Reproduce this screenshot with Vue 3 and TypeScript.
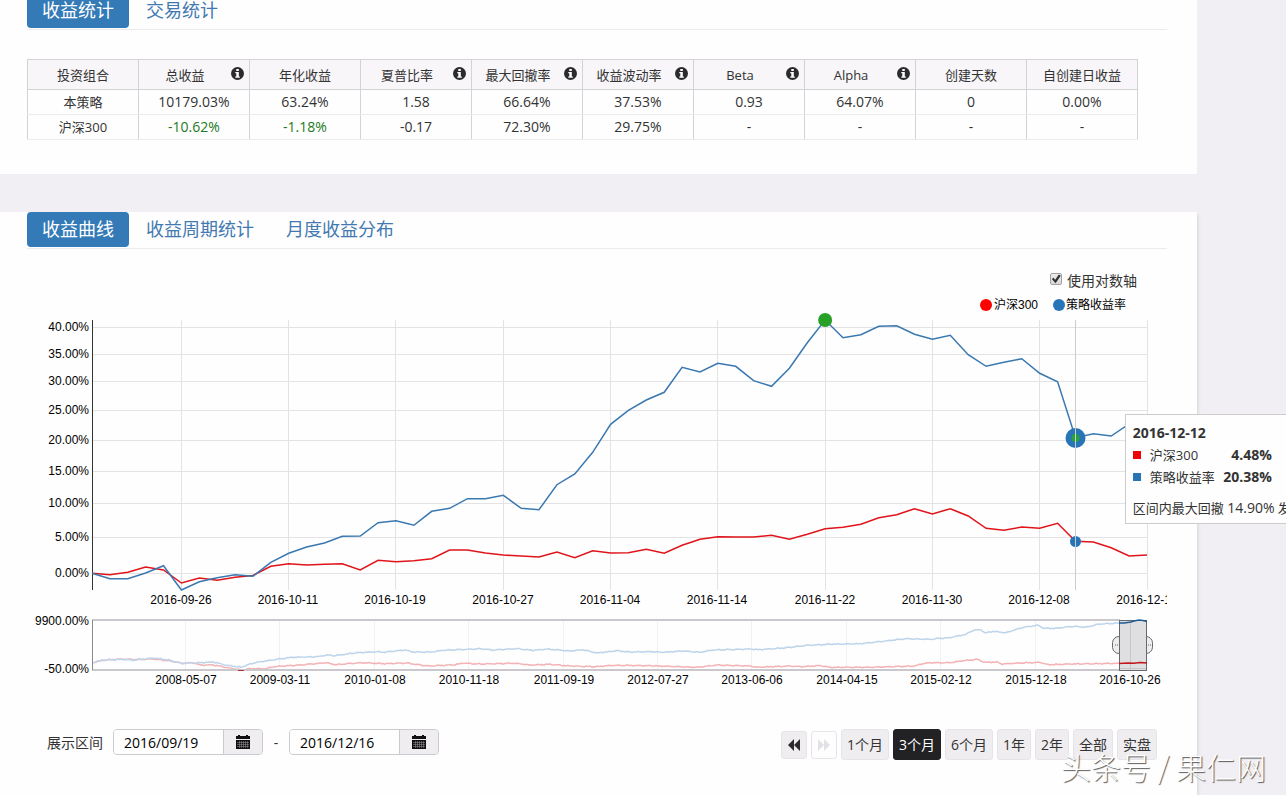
<script setup lang="ts">
import { ref } from 'vue'

interface Point { x: number; y: number }
interface Column { title: string; info: boolean }

const columns: Column[] = [
  { title: '投资组合', info: false },
  { title: '总收益', info: true },
  { title: '年化收益', info: false },
  { title: '夏普比率', info: true },
  { title: '最大回撤率', info: true },
  { title: '收益波动率', info: true },
  { title: 'Beta', info: true },
  { title: 'Alpha', info: true },
  { title: '创建天数', info: false },
  { title: '自创建日收益', info: false },
]

const rows: { name: string; cells: string[] }[] = [
  { name: '本策略', cells: ['10179.03%', '63.24%', '1.58', '66.64%', '37.53%', '0.93', '64.07%', '0', '0.00%'] },
  { name: '沪深300', cells: ['-10.62%', '-1.18%', '-0.17', '72.30%', '29.75%', '-', '-', '-', '-'] },
]

const isLoss = (value: string): boolean => value.startsWith('-') && value.endsWith('%')

const plotWidth = 1055
const step = plotWidth / 59

const indexLine = [
  253.3, 254.7, 252.3, 247, 250, 263, 258, 260.3, 257.3, 255.5, 246.3, 243.7, 245, 244.3, 243.7,
  250, 240.3, 241.7, 240.7, 238.7, 230, 230, 233, 235, 236, 237, 232, 237.7, 230.7, 233,
  232.7, 229.3, 233.3, 225.3, 219.3, 216.7, 217, 217, 215.3, 219.3, 214.3, 208.7, 207.3, 204.3, 197.7,
  194.7, 188.7, 194, 188.7, 196, 208.3, 210.3, 207, 208.3, 203.3, 221.3, 222, 227.7, 236, 235,
]
const strategyLine = [
  253.3, 258.7, 258.7, 253, 245.7, 270, 261.7, 257.7, 254.7, 256.3, 242.3, 233.3, 227, 223, 216.3,
  216, 202.7, 200.7, 205.3, 191.3, 188.3, 178.7, 178.7, 175.3, 188.3, 189.7, 164.7, 154, 132.3, 104.3,
  90.3, 80, 72.3, 47.3, 52, 43.3, 46.3, 60.7, 66.3, 48.3, 22.7, 0, 17.7, 14.7, 6.3,
  5.7, 14.3, 19.3, 15.3, 34.7, 46.3, 42.3, 38.7, 53.3, 61.7, 117.7, 113.7, 116, 104, 100,
]

const toPoints = (ys: number[]): string =>
  ys.map((y, i) => `${(i * step).toFixed(1)},${y}`).join(' ')

const yTicks: [string, number][] = [
  ['40.00%', 7], ['35.00%', 34], ['30.00%', 61], ['25.00%', 90], ['20.00%', 120],
  ['15.00%', 151], ['10.00%', 183], ['5.00%', 217], ['0.00%', 253],
]

const xTicks: string[] = [
  '2016-09-26', '2016-10-11', '2016-10-19', '2016-10-27', '2016-11-04',
  '2016-11-14', '2016-11-22', '2016-11-30', '2016-12-08', '2016-12-16',
]
const tickX = (i: number): number => Math.floor((5 + i * 6) * step)

const overviewTicks: string[] = [
  '2008-05-07', '2009-03-11', '2010-01-08', '2010-11-18', '2011-09-19', '2012-07-27',
  '2013-06-06', '2014-04-15', '2015-02-12', '2015-12-18', '2016-10-26',
]
const overviewX = (i: number): number => Math.round(94 + i * 94.4)

const pairs = (list: number[]): Point[] => {
  const out: Point[] = []
  for (let i = 0; i < list.length; i += 2) out.push({ x: list[i], y: list[i + 1] })
  return out
}

const strategyOverview = pairs([
  0, 42.7, 11, 40, 31, 39.3, 41, 40.3, 61, 38, 75, 39.7, 90, 43.3, 108, 42.7, 121, 42, 135, 45.3,
  149, 47.3, 156, 44.7, 163, 42.7, 185, 39.3, 200, 37.3, 225, 36.7, 235, 35, 242, 35.7, 265, 32.7,
  285, 31.7, 291, 32.3, 313, 30, 321, 32, 338, 32, 351, 30.3, 388, 28.7, 401, 30, 425, 28.7, 441, 30.3,
  455, 29, 478, 31, 491, 29.7, 505, 33, 525, 30.7, 538, 32, 561, 31.7, 571, 32.3, 591, 31, 608, 32.3,
  621, 30, 658, 29, 666, 29.7, 695, 27.7, 715, 25.3, 738, 24.3, 768, 23.7, 787, 21.7, 814, 18.7,
  837, 19.3, 857, 17.7, 874, 14.3, 881, 10.3, 889, 9.7, 893, 13, 901, 11.3, 914, 12.7, 931, 7.3,
  946, 5.3, 952, 8.3, 964, 8.3, 981, 6.3, 994, 7.3, 1007, 4, 1027, 3,
])
const indexOverview = pairs([
  0, 42.7, 11, 40.3, 31, 39, 41, 39.5, 61, 39, 75, 40.5, 90, 43.3, 101, 42.7, 108, 45, 121, 45,
  135, 47.5, 149, 50, 160, 48.5, 173, 48.7, 183, 46.5, 208, 45, 234, 42.7, 243, 44.7, 258, 43.5,
  271, 42.7, 293, 43.7, 315, 43, 328, 45, 338, 46, 363, 44.7, 371, 43, 385, 44, 423, 43.3, 438, 45,
  458, 44.3, 478, 46, 503, 46.7, 521, 45.3, 558, 45.7, 605, 47.3, 625, 45, 658, 46, 665, 47.3,
  698, 46, 708, 46.7, 728, 45.7, 738, 47.3, 778, 47.3, 788, 47, 823, 46, 830, 43.7, 840, 42.7,
  858, 42.7, 871, 40.7, 885, 39.3, 893, 42.3, 905, 42, 910, 44, 928, 43, 948, 42.3, 956, 44.7,
  978, 44, 1027, 43.3,
])

// Fills the gaps between anchors with small daily swings.
const dailyPath = (anchors: Point[]): string => {
  const out: string[] = []
  for (let i = 0; i < anchors.length - 1; i++) {
    const a = anchors[i]
    const b = anchors[i + 1]
    for (let x = a.x; x < b.x; x += 2) {
      const t = (x - a.x) / (b.x - a.x)
      const swing = Math.sin(x * 1.7) * 0.3 + Math.sin(x * 0.63) * 0.3
      out.push(`${x},${(a.y + (b.y - a.y) * t + swing).toFixed(1)}`)
    }
  }
  const last = anchors[anchors.length - 1]
  out.push(`${last.x},${last.y}`)
  return out.join(' ')
}

const cursorX = Math.floor(55 * step) + 0.5
const logAxis = ref(true)
const startDate = ref('2016/09/19')
const endDate = ref('2016/12/16')
const ranges: string[] = ['1个月', '3个月', '6个月', '1年', '2年', '全部', '实盘']
const activeRange = ref('3个月')
</script>

<template>
  <div class="page">
    <section class="panel summary">
      <nav class="tabs">
        <a class="tab active" href="#stats">收益统计</a>
        <a class="tab" href="#trades">交易统计</a>
      </nav>
      <table class="stats">
        <thead>
          <tr>
            <th v-for="col in columns" :key="col.title" scope="col">
              <div class="head">
                <span class="head-text">{{ col.title }}</span>
                <svg v-if="col.info" class="info" viewBox="0 0 13 13" aria-hidden="true">
                  <circle cx="6.5" cy="6.5" r="6.5" fill="#2b2b2e" />
                  <path d="M5.3 2h2.5v2H5.3zM4.3 5h3.5v4.4h1v1.3H4.3V9.4h1V6.3h-1z" fill="#fff" />
                </svg>
              </div>
            </th>
          </tr>
        </thead>
        <tbody>
          <tr v-for="row in rows" :key="row.name">
            <td class="name">{{ row.name }}</td>
            <td v-for="(cell, i) in row.cells" :key="i" :class="{ loss: isLoss(cell) }">{{ cell }}</td>
          </tr>
        </tbody>
      </table>
    </section>

    <section class="panel curve">
      <nav class="tabs">
        <a class="tab active" href="#curve">收益曲线</a>
        <a class="tab" href="#period">收益周期统计</a>
        <a class="tab" href="#monthly">月度收益分布</a>
      </nav>

      <div class="options">
        <input id="log-axis" v-model="logAxis" class="check" type="checkbox" />
        <label for="log-axis">使用对数轴</label>
      </div>

      <div class="chart">
        <svg class="plot" viewBox="0 0 1140 400">
          <g class="legend">
            <circle cx="959" cy="13" r="6" fill="#f00" />
            <text x="967" y="17">沪深300</text>
            <circle cx="1032" cy="13" r="6" fill="#2775b6" />
            <text x="1039" y="17">策略收益率</text>
          </g>

          <g transform="translate(65 28)">
            <g class="grid">
              <line v-for="[label, y] in yTicks" :key="label" x1="0" :x2="plotWidth" :y1="y + 0.5" :y2="y + 0.5" />
              <line v-for="(label, i) in xTicks" :key="label" :x1="tickX(i) + 0.5" :x2="tickX(i) + 0.5" y1="0" y2="270" />
            </g>
            <text v-for="[label, y] in yTicks" :key="label" class="y-label" x="-3" :y="y + 4">{{ label }}</text>
            <text v-for="(label, i) in xTicks" :key="label" class="x-label" :x="tickX(i)" y="284">{{ label }}</text>
            <line class="axis" x1="0.5" x2="0.5" y1="0" y2="270" />
            <polyline class="line index" :points="toPoints(indexLine)" />
            <polyline class="line strategy" :points="toPoints(strategyLine)" />
            <circle :cx="41 * step" cy="0" r="7" fill="#27a127" />
            <circle :cx="cursorX" cy="118" r="10" fill="#2775b6" />
            <circle :cx="cursorX" cy="118" r="4" fill="#27a13c" />
            <circle :cx="cursorX" cy="221.5" r="5.5" fill="#2775b6" />
            <line class="cursor" :x1="cursorX" :x2="cursorX" y1="0" y2="270" />
          </g>

          <g transform="translate(65 328)">
            <line v-for="(label, i) in overviewTicks" :key="label" class="faint" :x1="overviewX(i) - 0.5" :x2="overviewX(i) - 0.5" y1="0" y2="50" />
            <text v-for="(label, i) in overviewTicks" :key="label" class="x-label" :x="overviewX(i)" y="64">{{ label }}</text>
            <text class="y-label" x="-3" y="5">9900.00%</text>
            <text class="y-label" x="-3" y="53">-50.00%</text>
            <polyline class="thin" stroke="#f3b3b6" :points="dailyPath(indexOverview)" />
            <polyline class="thin" stroke="#bdd4ea" :points="dailyPath(strategyOverview)" />
            <path d="M0 0H1028M0 50H1028" stroke="#cac8cc" stroke-width="2" />
            <path d="M146 50.5h6" stroke="#b03038" />
            <path d="M0.5 0V50" stroke="#8c8a8e" />
            <rect x="1027.5" y="0.5" width="27" height="50" fill="#dfdee0" stroke="#6a686c" />
            <path d="M1038.5 1V50M1028 48.5H1054" stroke="#c6c5c8" />
            <polyline class="thin" stroke="#1d5c92" points="1027,3 1032,3 1039,2 1042,1 1047,0 1051,0.5 1055,1.5" />
            <polyline class="thin" stroke="#c4171d" points="1027,43.5 1036,43 1042,43.3 1048,42.5 1055,43" />
            <path class="handle" d="M1027.5 16.5a6.5 6.5 0 0 0 -7 6v5a6.5 6.5 0 0 0 7 6z" />
            <path class="handle" d="M1054.5 16.5a6.5 6.5 0 0 1 6 6v5a6.5 6.5 0 0 1 -6 6z" />
            <path d="M1023.5 24v2M1025.5 24v2M1056.5 24v2M1058.5 24v2" stroke="#aaa" />
          </g>
        </svg>

        <div class="tooltip">
          <strong class="tip-date">2016-12-12</strong>
          <div class="tip-row"><i class="swatch red"></i><span class="tip-name">沪深300</span><b>4.48%</b></div>
          <div class="tip-row"><i class="swatch blue"></i><span class="tip-name">策略收益率</span><b>20.38%</b></div>
          <p class="tip-note">区间内最大回撤 <span class="tip-number">14.90%</span> 发生</p>
        </div>
      </div>

      <div class="controls">
        <div class="dates">
          <label class="date-label" for="start-date">展示区间</label>
          <div class="date-field">
            <input id="start-date" v-model="startDate" type="text" />
            <button type="button" aria-label="选择开始日期">
              <svg class="calendar" viewBox="0 0 14 14" aria-hidden="true">
                <path d="M0 1h2V0h2v1h6V0h2v1h2v3H0zM0 5h14v9H0z" fill="#111" />
                <path d="M1 7.5h12M1 9.5h12M1 11.5h12M3.5 6v7M5.5 6v7M7.5 6v7M9.5 6v7M11.5 6v7" stroke="#999" stroke-width="0.5" />
              </svg>
            </button>
          </div>
          <span class="dash">-</span>
          <div class="date-field">
            <input id="end-date" v-model="endDate" type="text" aria-label="结束日期" />
            <button type="button" aria-label="选择结束日期">
              <svg class="calendar" viewBox="0 0 14 14" aria-hidden="true">
                <path d="M0 1h2V0h2v1h6V0h2v1h2v3H0zM0 5h14v9H0z" fill="#111" />
                <path d="M1 7.5h12M1 9.5h12M1 11.5h12M3.5 6v7M5.5 6v7M7.5 6v7M9.5 6v7M11.5 6v7" stroke="#999" stroke-width="0.5" />
              </svg>
            </button>
          </div>
        </div>
        <div class="ranges">
          <button type="button" class="shift" aria-label="向前">
            <svg class="arrows" viewBox="0 0 12 12" aria-hidden="true"><path d="M6 0v12L0 6zM12 0v12L6 6z" fill="#2b2b2e" /></svg>
          </button>
          <button type="button" class="shift off" aria-label="向后" disabled>
            <svg class="arrows" viewBox="0 0 12 12" aria-hidden="true"><path d="M0 0v12l6-6zM6 0v12l6-6z" fill="#e3e1e5" /></svg>
          </button>
          <button
            v-for="range in ranges"
            :key="range"
            type="button"
            class="range"
            :class="{ active: range === activeRange }"
            @click="activeRange = range"
          >{{ range }}</button>
        </div>
      </div>
    </section>

    <div class="watermark">头条号 / 果仁网</div>
  </div>
</template>

<style>
html,
body {
  background: #f1eff3;
}
</style>

<style scoped>
.page {
  position: relative;
  height: 100vh;
  overflow: hidden;
  box-sizing: border-box;
  background: #f1eff3;
  color: #333;
  font-family: "Open Sans", "Noto Sans CJK SC", sans-serif;
  font-size: 14px;
}
.page * {
  box-sizing: border-box;
}
.panel {
  margin-right: 89px;
  padding: 0 30px 0 27px;
  background: #fefefe;
}
.summary {
  margin-top: -7px;
  padding-bottom: 34px;
}
.curve {
  margin-top: 38px;
  min-height: 100vh;
  box-shadow: 1px 3px 3px #d6d4d8;
}
.tabs {
  display: flex;
  gap: 2px;
  padding-bottom: 1px;
  border-bottom: 1px solid #eceaed;
}
.tab {
  height: 35px;
  padding: 0 15px;
  border-radius: 4px;
  color: #4279b0;
  font-size: 18px;
  line-height: 34px;
  text-decoration: none;
}
.tab.active {
  background: #337ab7;
  color: #fff;
}

.stats {
  width: calc(100% - 29px);
  margin-top: 29px;
  border-collapse: collapse;
  table-layout: fixed;
  text-align: center;
}
.stats th {
  height: 30px;
  padding: 0;
  border: 1px solid #d4d1d7;
  background: #f8f6f9;
  font-size: 13px;
  font-weight: 400;
}
.stats td {
  height: 25px;
  padding: 0;
  border: 1px solid #d4d1d7;
  border-bottom-color: #eceaed;
  line-height: 20px;
}
.stats tbody tr + tr td {
  border-top-color: #eceaed;
}
.stats .name {
  font-size: 13px;
}
.stats .loss {
  color: #1c7a24;
}
.head {
  display: flex;
  align-items: center;
}
.head-text {
  flex: 1;
  line-height: 20px;
}
.info {
  width: 13px;
  height: 13px;
  margin: 0 5px 2px 0;
}

.options {
  display: flex;
  justify-content: flex-end;
  align-items: center;
  gap: 5px;
  height: 20px;
  margin: 21px 30px 2px 0;
}
.check {
  appearance: none;
  width: 12px;
  height: 12px;
  margin: 0 0 2px;
  border: 1px solid #a3a1a5;
  border-radius: 2px;
  background: linear-gradient(#ececec, #d9d8da);
}
.check:checked::before {
  content: "";
  display: block;
  width: 10px;
  height: 10px;
  background: #333;
  clip-path: polygon(8% 50%, 25% 38%, 42% 58%, 78% 5%, 98% 18%, 46% 92%);
}

.chart {
  position: relative;
}
.plot {
  display: block;
  width: 100%;
  height: auto;
  overflow: hidden;
  font-family: "Liberation Sans", "Noto Sans CJK SC", sans-serif;
  font-size: 12px;
}
.grid line {
  stroke: #e3e2e5;
}
.faint {
  stroke: #f1f0f3;
}
.axis {
  stroke: #333;
}
.cursor {
  stroke: #ccc;
}
.x-label {
  text-anchor: middle;
}
.y-label {
  text-anchor: end;
}
.line {
  fill: none;
  stroke-width: 1.5;
}
.index {
  stroke: #e0141a;
}
.strategy {
  stroke: #3a78b0;
}
.thin {
  fill: none;
  stroke-width: 1.5;
}
.handle {
  fill: #eee;
  stroke: #6a686c;
}

.tooltip {
  position: absolute;
  top: 122px;
  left: 96.3%;
  padding: 7px 6px 4px 7px;
  border: 1px solid #ccc;
  background: #fefefe;
  font-size: 13px;
  line-height: 22px;
  white-space: nowrap;
}
.tip-date {
  display: block;
  font-size: 14px;
}
.tip-row {
  display: flex;
  align-items: center;
  width: 139px;
}
.tip-row b {
  margin-left: auto;
  font-size: 14px;
}
.swatch {
  width: 8px;
  height: 8px;
  margin-right: 9px;
}
.swatch.red {
  background: #f00505;
}
.swatch.blue {
  background: #2775b6;
}
.tip-note {
  margin: 9px 0 0;
}
.tip-number {
  font-size: 14px;
}

.controls {
  display: flex;
  justify-content: space-between;
  align-items: flex-start;
  margin-top: 37px;
  padding: 0 10px 0 20px;
}
.dates,
.ranges {
  display: flex;
  align-items: center;
}
.date-label {
  margin-right: 10px;
}
.date-field {
  display: flex;
  width: 150px;
  height: 26px;
  border: 1px solid #ccc9cf;
  border-radius: 4px;
  overflow: hidden;
}
.date-field input {
  flex: 1;
  min-width: 0;
  padding: 0 0 0 10px;
  border: 0;
  background: #fefefe;
  color: #000;
  font: inherit;
}
.date-field button {
  display: flex;
  align-items: center;
  justify-content: center;
  width: 39px;
  padding: 0;
  border: 0;
  border-left: 1px solid #ccc9cf;
  background: #efedf0;
}
.calendar {
  width: 14px;
  height: 14px;
}
.dash {
  width: 26px;
  text-align: center;
}
.ranges {
  gap: 4px;
}
.ranges button {
  border: 1px solid #e6e4e8;
  border-radius: 3px;
  background: #efedf0;
  color: #333;
  font: inherit;
}
.ranges .range {
  height: 31px;
  padding: 0 5px 2px;
}
.ranges .active {
  border-color: #222;
  background: #222124;
  color: #fff;
}
.ranges .shift {
  display: flex;
  align-items: center;
  justify-content: center;
  width: 26px;
  height: 28px;
  padding: 0;
}
.ranges .off {
  background: #fefefe;
}
.arrows {
  width: 12px;
  height: 12px;
}

.watermark {
  position: absolute;
  right: 20px;
  bottom: 7px;
  color: #fff;
  font-family: "Noto Sans CJK SC", sans-serif;
  font-size: 30px;
  font-weight: 300;
  line-height: 44px;
  text-shadow: 1px 1px 1px #555;
}
</style>
